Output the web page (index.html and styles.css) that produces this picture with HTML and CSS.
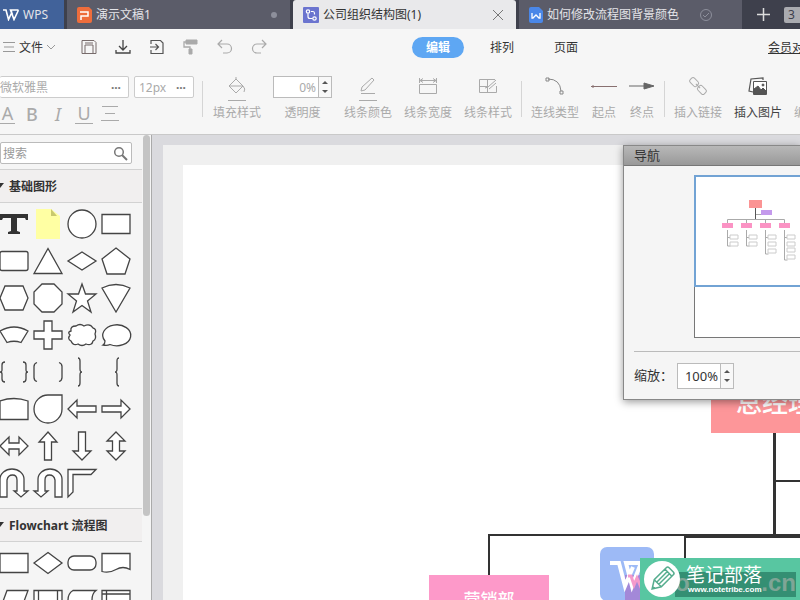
FILE: index.html
```html
<!DOCTYPE html>
<html lang="zh-CN">
<head>
<meta charset="utf-8">
<title>公司组织结构图(1)</title>
<link rel="stylesheet" href="styles.css">
</head>
<body>
<nav class="tabs">
  <a class="tab home" href="#"><svg width="16" height="12" viewBox="0 0 16 12" fill="none" stroke="#fff" stroke-width="1.6"><path d="M0 1h3l2.500 9.500L9 3M15.500 1h-8l3.500 9.500L15.500 1M8 1l1.500 5"/></svg><span>WPS</span></a>
  <a class="tab" href="#"><svg width="15" height="16" viewBox="0 0 15 16"><path d="M2 0h10l3 3v11a2 2 0 0 1-2 2H2a2 2 0 0 1-2-2V2a2 2 0 0 1 2-2z" fill="#ee6d3c"/><path d="M3 5h8v4H4v4" fill="none" stroke="#fff" stroke-width="1.500"/></svg><span class="name">演示文稿1</span><i class="dot"></i></a>
  <a class="tab active" href="#"><svg width="16" height="16" viewBox="0 0 16 16"><rect width="16" height="16" rx="1" fill="#6b74cf"/><g fill="none" stroke="#fff" stroke-width="1.200"><circle cx="5" cy="4.500" r="1.700"/><circle cx="11.500" cy="11.500" r="1.700"/><path d="M5 6.500v3q0 2 2 2h2.500M8 4.500h2q1.500 0 1.500 2v1"/></g></svg><span class="name">公司组织结构图(1)</span><svg width="12" height="12" viewBox="0 0 12 12" stroke="#777" fill="none"><path d="M1 1l10 10M11 1L1 11"/></svg></a>
  <a class="tab doc" href="#"><svg width="14" height="16" viewBox="0 0 14 16"><path d="M2 0h8l4 4v10a2 2 0 0 1-2 2H2a2 2 0 0 1-2-2V2a2 2 0 0 1 2-2z" fill="#4a87e8"/><path d="M3 6v5h1l3-3 3 3h1V6" fill="none" stroke="#fff" stroke-width="1.300"/></svg><span class="name">如何修改流程图背景颜色</span><svg class="check" width="12" height="12" viewBox="0 0 12 12" fill="none" stroke="#8d8f9b"><circle cx="6" cy="6" r="5.500"/><path d="M3 6l2 2 4-4"/></svg></a>
  <button class="add" aria-label="新建"><svg width="13" height="13" viewBox="0 0 13 13" stroke="#ddd" stroke-width="1.500"><path d="M0 6.500h13M6.500 0v13"/></svg></button>
  <span class="count">3</span>
</nav>

<header class="menu">
  <button class="file"><svg width="12" height="10" viewBox="0 0 12 10" stroke="#999"><path d="M0 .5h12M1 5h10M0 9.500h12"/></svg>文件<svg width="8" height="5" viewBox="0 0 8 5" fill="none" stroke="#999"><path d="M0 0l4 4 4-4"/></svg></button>
  <div class="quick">
    <button aria-label="保存"><svg width="16" height="16" viewBox="0 0 16 16" fill="none" stroke="#776b6b"><path d="M1 1.500h12l2 2v11H1zM4 14V6h8v8M4 4h8"/></svg></button>
    <button aria-label="下载"><svg width="16" height="16" viewBox="0 0 16 16" fill="none" stroke="#444" stroke-width="1.300"><path d="M8 1v10M4 7l4 4 4-4M1 11v3h14v-3"/></svg></button>
    <button aria-label="导出"><svg width="16" height="16" viewBox="0 0 16 16" fill="none" stroke="#555" stroke-width="1.200"><path d="M2 5V1.500h9.500l2.500 2.500v10.500H2V11M1 8h8M6.500 5L9.500 8l-3 3"/></svg></button>
    <button aria-label="格式刷"><svg width="16" height="16" viewBox="0 0 16 16" fill="none" stroke="#aaa"><path d="M3 1h11v4H3z" fill="#aaa"/><path d="M3 3H1v5h6v2" stroke-width="1.300"/><path d="M6 10h3v5H6z" fill="#aaa"/></svg></button>
    <button aria-label="撤销"><svg width="16" height="16" viewBox="0 0 16 16" fill="none" stroke="#aaa" stroke-width="1.200"><path d="M5 1L1 5l4 4M1 5h9a4.500 4.500 0 0 1 0 9H6"/></svg></button>
    <button aria-label="重做"><svg width="16" height="16" viewBox="0 0 16 16" fill="none" stroke="#aaa" stroke-width="1.200"><path d="M11 1l4 4-4 4M15 5H6a4.500 4.500 0 0 0 0 9h4"/></svg></button>
  </div>
  <div class="modes"><button class="on">编辑</button><button>排列</button><button>页面</button></div>
  <a class="member" href="#">会员对比</a>
</header>

<section class="ribbon">
  <div class="fonts">
    <div class="row">
      <label class="combo family"><input aria-label="字体" value="微软雅黑"><b>···</b></label>
      <label class="combo size"><input aria-label="字号" value="12px"><b>···</b></label>
    </div>
    <div class="row format">
      <button aria-label="文字颜色" class="under">A</button><button aria-label="加粗" class="bold">B</button><button aria-label="斜体" class="it">I</button><button aria-label="下划线" class="under">U</button><button aria-label="对齐"><svg width="18" height="15" viewBox="0 0 18 15" stroke="#aaa"><path d="M1 .5h16M4 7.500h10M0 14.500h18"/></svg></button>
    </div>
  </div>
  <hr>
  <button class="tool t60"><svg width="22" height="26" viewBox="0 0 22 26" fill="none" stroke="#aaa"><path d="M10 3l7 7-7 7-7-7zM10 3V1M17 10q3 3 1 6M3 10h14M2 24.500h18"/></svg>填充样式</button>
  <div class="tool opacity"><div class="spin"><input id="op" value="0%"><span><button aria-label="增加"></button><button aria-label="减少" class="down"></button></span></div><label for="op">透明度</label></div>
  <button class="tool t60"><svg width="22" height="26" viewBox="0 0 22 26" fill="none" stroke="#aaa"><path d="M4 15l1-4L15 2l2 2L8 14zM4 17.500h14M2 24.500h18"/></svg>线条颜色</button>
  <button class="tool t60"><svg width="22" height="26" viewBox="0 0 22 26" fill="none" stroke="#aaa"><path d="M2.500 8.500h17v9h-17zM2.500 2v5M19.500 2v5M3 4.500h16M6 2.500l-3 2 3 2M16 2.500l3 2-3 2"/></svg>线条宽度</button>
  <button class="tool t60"><svg width="22" height="26" viewBox="0 0 22 26" fill="none" stroke="#aaa"><path d="M18 3.500H2.500v13h17V10M2.500 10.500H11M10.500 3.500v13M19 4l-8 7-3 1M12 13l7-6"/></svg>线条样式</button>
  <hr class="tight">
  <button class="tool t64"><svg width="22" height="26" viewBox="0 0 22 26" fill="none" stroke="#888"><path d="M4 3q12 0 13 12M2 2h3v3H2zM16 15h3v3h-3z"/></svg>连线类型</button>
  <button class="tool t38"><svg width="28" height="26" viewBox="0 0 28 26" stroke="#887070"><path d="M1 10.500h26M3 9v3"/></svg>起点</button>
  <button class="tool t38"><svg width="28" height="26" viewBox="0 0 28 26" stroke="#666"><path d="M1 10h16"/><path d="M16 7l10 3-10 3z" fill="#666"/></svg>终点</button>
  <hr class="tight">
  <button class="tool t60"><svg width="22" height="26" viewBox="0 0 22 26" fill="none" stroke="#aaa"><g transform="rotate(45 11 10)"><rect x="1" y="7" width="9" height="6" rx="2"/><rect x="12" y="7" width="9" height="6" rx="2"/><path d="M8 10h6"/></g></svg>插入链接</button>
  <button class="tool t60 dark"><svg width="22" height="26" viewBox="0 0 22 26" fill="none" stroke="#555"><path d="M6 16l-4-1L4 3l12-1v2" stroke-width="1.200"/><path d="M6.500 5.500h13v13h-13z" fill="#fff"/><path d="M7 18v-5l4-3 3 4 2-2 3 3v3z" fill="#555"/><circle cx="16" cy="9" r="1" fill="#555"/></svg>插入图片</button>
  <button class="tool t60"><svg width="22" height="26" viewBox="0 0 22 26" fill="none" stroke="#aaa"><path d="M4 2h14l4 8-4 8H4L1 15V5z"/></svg>编辑图片</button>
</section>

<main class="work">
  <aside class="side">
    <div class="panel">
      <form class="find"><input aria-label="搜索" placeholder="搜索"><svg width="15" height="15" viewBox="0 0 15 15" fill="none" stroke="#777" stroke-width="1.500"><circle cx="6" cy="6" r="4.300"/><path d="M9 9l5 5" stroke-width="2"/></svg></form>
      <h2>基础图形</h2>
      <div class="shapes">
        <svg viewBox="-17 -18 34 37"><path d="M-14-10H14v6h-2l-1-2H3V7l3 1v2H-6V8l3-1V-6h-8l-1 2h-2z" fill="#333" stroke="none"/></svg>
        <svg viewBox="-17 -18 34 37"><path d="M-12-15H3l9 7V15h-24z" fill="#ffffa3" stroke="none"/><path d="M3-15v7h6z" fill="#c9c96e" stroke="none"/></svg>
        <svg viewBox="-17 -18 34 37"><circle r="14"/></svg>
        <svg viewBox="-17 -18 34 37"><path d="M-14-9.500h28v19h-28z"/></svg>
        <svg viewBox="-17 -18 34 37"><rect x="-14" y="-9.500" width="28" height="19" rx="2"/></svg>
        <svg viewBox="-17 -18 34 37"><path d="M0-12.500L14 12.500h-28z"/></svg>
        <svg viewBox="-17 -18 34 37"><path d="M0-9L14 0 0 9-14 0z"/></svg>
        <svg viewBox="-17 -18 34 37"><path d="M0-13L14-2 9 13H-9L-14-2z"/></svg>
        <svg viewBox="-17 -18 34 37"><path d="M-9-12H9L14 0 9 12H-9L-14 0z"/></svg>
        <svg viewBox="-17 -18 34 37"><path d="M-6-14H6l8 8V6l-8 8H-6l-8-8V-6z"/></svg>
        <svg viewBox="-17 -18 34 37"><path d="M0-14l3.500 10H14L5.500 3 9 14 0 7.500-9 14-5.500 3-14-4h10.500z"/></svg>
        <svg viewBox="-17 -18 34 37"><path d="M-14-10Q0-17 14-10L0 14z"/></svg>
        <svg viewBox="-17 -18 34 37"><path d="M-14-4Q0-12 14-4L7 7.500Q0 5-7 7.500z"/></svg>
        <svg viewBox="-17 -18 34 37"><path d="M-4-14h8V-4h10v8H4v10h-8V4h-10v-8H-4z"/></svg>
        <svg viewBox="-17 -18 34 37"><path d="M-11-4Q-12-9-6-9-2-12 2-9 8-12 11-7 15-6 13-1 15 4 11 6 10 11 4 9 0 12-4 9-9 11-11 6-15 4-12 0-15-3-11-4z"/></svg>
        <svg viewBox="-17 -18 34 37"><path d="M-11 6A14 10.500 0 1 1-6 9.500Q-9 11-13 10-11 9-11 6z"/></svg>
        <svg viewBox="-17 -18 34 37"><path class="line" d="M-9-10q-3 0-3 3v5q0 2-2 2 2 0 2 2v5q0 3 3 3M9-10q3 0 3 3v5q0 2 2 2-2 0-2 2v5q0 3-3 3"/></svg>
        <svg viewBox="-17 -18 34 37"><path class="line" d="M-11-9.500q-3 1-3 4v11q0 3 3 4M11-9.500q3 1 3 4v11q0 3-3 4"/></svg>
        <svg viewBox="-17 -18 34 37"><path class="line" d="M-4-14q2 0 2 3V-3q0 3 2 3-2 0-2 3v8q0 3-2 3"/></svg>
        <svg viewBox="-17 -18 34 37"><path class="line" d="M3-14q-2 0-2 3V-3q0 3-2 3 2 0 2 3v8q0 3 2 3"/></svg>
        <svg viewBox="-17 -18 34 37"><path d="M-14-8Q0-13 14-8V10.500h-28z"/></svg>
        <svg viewBox="-17 -18 34 37"><path d="M0-14H14V0A14 14 0 1 1 0-14z"/></svg>
        <svg viewBox="-17 -18 34 37"><path d="M-14 0l9-9v6h19v6H-5v6z"/></svg>
        <svg viewBox="-17 -18 34 37"><path d="M14 0l-9-9v6h-19v6H5v6z"/></svg>
        <svg viewBox="-17 -18 34 37"><path d="M-14 0l9-9v6H5v-6l9 9-9 9V3H-5v6z"/></svg>
        <svg viewBox="-17 -18 34 37"><path d="M0-14l9 10H3.500v18h-7V-4H-9z"/></svg>
        <svg viewBox="-17 -18 34 37"><path d="M0 14L9 5H3.500v-19h-7V5H-9z"/></svg>
        <svg viewBox="-17 -18 34 37"><path d="M0-14l9 9H3.500V5H9L0 14-9 5h5.500V-5H-9z"/></svg>
        <svg viewBox="-17 -18 34 37"><path d="M-14 14V-4a12 10 0 0 1 24 0V8h4L7 14 0 8h3V-3q0-5-4.500-5T-7-3v17z"/></svg>
        <svg viewBox="-17 -18 34 37"><path d="M14 14V-4a12 10 0 0 0-24 0V8h-4l7 6L0 8h-3V-3q0-5 4.500-5T7-3v17z"/></svg>
        <svg viewBox="-17 -18 34 37"><path d="M-14-13.500h28l-5 5H-9V9l-5 5z"/></svg>
      </div>
      <h2>Flowchart 流程图</h2>
      <div class="shapes">
        <svg viewBox="-17 -18 34 37"><path d="M-14-9.500h28v19h-28z"/></svg>
        <svg viewBox="-17 -18 34 37"><path d="M0-10.500L14 0 0 10.500-14 0z"/></svg>
        <svg viewBox="-17 -18 34 37"><rect x="-14" y="-7" width="28" height="14" rx="6"/></svg>
        <svg viewBox="-17 -18 34 37"><path d="M-14-9.500h28v16q-7-4-14 0t-14 2z"/></svg>
        <svg viewBox="-17 -18 34 37"><path d="M-7-9.500h21l-7 19h-21z"/></svg>
        <svg viewBox="-17 -18 34 37"><path d="M-14-9.500h28v19h-28zM-9.500-9.500v19M9.500-9.500v19"/></svg>
        <svg viewBox="-17 -18 34 37"><path d="M-9-9.500h23q-4 3-4 9.500t4 9.500H-9q-5-3-5-9.500t5-9.500z"/></svg>
        <svg viewBox="-17 -18 34 37"><path d="M-14-9.500h28v19h-28zM-9.500-9.500v19M-14-6h28"/></svg>
      </div>
    </div>
    <div class="track"><i></i></div>
  </aside>

  <div class="canvas">
    <div class="page">
      <svg class="wires" width="700" height="500" viewBox="0 0 700 500" fill="none" stroke="#333" stroke-width="2"><path d="M306 410v-40h334M502 371v60M591 316h60"/><path d="M591.500 260v111M502 371.500h150" stroke-width="3"/></svg>
      <div class="node root">总经理</div>
      <div class="node sales">营销部</div>
    </div>
    <svg class="logo" width="54" height="54" viewBox="0 0 54 54"><rect width="54" height="54" rx="7" fill="#9dbaf6"/><path d="M25 28h29v26H25z" fill="#a388d8"/><path d="M10 16h9l6 23 8-19M42 16H26l6 23 9-23" fill="none" stroke="#fff" stroke-width="4"/><path d="M28 29h3l3 9 3-7 3 7 3-9" fill="none" stroke="#f59acb" stroke-width="3"/></svg>
    <div class="brand">
      <svg width="36" height="36" viewBox="0 0 36 36"><circle cx="18" cy="18" r="18" fill="#fff"/><g fill="none" stroke="#55ad8e" stroke-width="1.500" transform="rotate(45 18 18)"><path d="M13 7q0-2 2-2h6q2 0 2 2v17l-5 8-5-8zM13 9h10M13 24h10M16.500 9v15M19.500 9v15M16.500 30h3"/></g></svg>
      <div class="under-mark"><span>o</span><span>.cn</span></div>
      <div class="words"><strong>笔记部落</strong><small>www.notetribe.com</small></div>
    </div>
    <section class="navigator">
      <h3>导航</h3>
      <div class="preview"><div class="view">
        <svg width="106" height="108" viewBox="0 0 106 108"><g fill="none" stroke="#aaa"><path d="M31.500 50v-7.500h57V50M50.500 43v7M69.500 43v7M60 37.500h6"/><path d="M59.500 31v11" stroke="#555"/><path d="M31.500 53v16h3M50.500 53v16h3M69.500 53v24h3M88.500 53v30h3M31.500 60.500h3M50.500 60.500h3M69.500 60.500h3M88.500 60.500h3"/><path d="M34 58h8v4h-8zM34 65h8v4h-8zM53 58h8v4h-8zM53 65h8v4h-8zM72 58h8v4h-8zM72 65h8v4h-8zM72 72h8v4h-8zM91 58h8v4h-8zM91 65h8v4h-8zM91 71h8v4h-8zM91 78h8v4h-8z" fill="#fff" stroke="#ccc"/></g><path d="M53 23h13v8H53z" fill="#fb9494"/><path d="M65 33h11v5H65z" fill="#c49aec"/><path d="M26 46h11v5H26zM45 46h11v5H45zM64 46h11v5H64zM83 46h11v5H83z" fill="#fb93c4"/></svg>
      </div></div>
      <div class="zoom"><label for="zm">缩放：</label><div class="spin"><input id="zm" value="100%"><span><button aria-label="放大"></button><button aria-label="缩小" class="down"></button></span></div></div>
    </section>
  </div>
</main>
</body>
</html>
```
FILE: styles.css
```css
* { box-sizing: border-box; }
body, button, input { font-family: "Noto Sans", "Noto Sans CJK SC", sans-serif; font-size: 12px; }
body { margin: 0; height: 100vh; display: flex; flex-direction: column; overflow: hidden; background: #f6f6f6; color: #333; }
button { padding: 0; border: 0; background: none; color: inherit; flex: none; }
input { border: 0; padding: 0; min-width: 0; background: none; color: inherit; outline: 0; }
svg { flex: none; display: block; }
a { color: inherit; }

.tabs { height: 29px; flex: none; display: flex; align-items: stretch; gap: 3px; background: #3e404c; color: #e4e4e8; overflow: hidden; }
.tab { flex: 0 0 223px; display: flex; align-items: center; gap: 4px; padding: 0 12px 0 10px; background: #5b5c69; text-decoration: none; line-height: 29px; white-space: nowrap; }
.tab .name { flex: 1; }
.home { flex-basis: 64px; background: #41629a; padding: 0 0 0 3px; }
.active { background: #e9e9eb; color: #333; border-radius: 3px 3px 0 0; padding-left: 10px; }
.doc { padding-left: 10px; }
.check { margin-right: 18px; }
.dot { width: 6px; height: 6px; border-radius: 3px; background: #8d8f9b; margin-right: 1px; }
.add { width: 36px; display: flex; align-items: center; justify-content: center; }
.count { align-self: center; flex: none; width: 22px; height: 16px; padding-left: 4px; line-height: 16px; background: #aaabb0; color: #3e404c; border-radius: 2px; }

.menu { height: 36px; flex: none; display: flex; align-items: center; overflow: hidden; }
.file { display: flex; align-items: center; gap: 4px; padding-left: 3px; width: 81px; }
.quick { display: flex; gap: 18px; width: 331px; flex: none; }
.modes { display: flex; gap: 12px; flex: none; }
.modes button { width: 52px; height: 21px; border-radius: 11px; }
.modes .on { background: #5ea7f3; color: #fff; font-weight: bold; }
.member { margin-left: 176px; white-space: nowrap; flex: none; }

.ribbon { height: 70px; flex: none; display: flex; border-bottom: 1px solid #c9c9c9; color: #aaa; overflow: hidden; }
.ribbon hr { width: 1px; height: 36px; margin: 16px 4px 0; border: 0; background: #d5d5d5; flex: none; }
.ribbon .tight { margin: 16px 3px 0; }
.fonts { flex: none; width: 198px; padding-top: 11px; }
.row { display: flex; gap: 5px; }
.combo { display: flex; align-items: center; height: 22px; border: 1px solid #ccc; border-radius: 2px; background: #fff; padding: 0 7px 0 4px; }
.combo input { flex: 1; }
.combo b { color: #777; }
.family { width: 129px; border-left: 0; padding-left: 0; }
.size { width: 60px; }
.format { gap: 8px; margin-top: 5px; }
.format button { width: 18px; height: 21px; font-size: 18px; line-height: 20px; display: flex; justify-content: center; align-items: center; }
.format button:first-child { width: 15px; }
.format .bold { font-weight: 500; }
.format .it { font-style: italic; }
.format .under { border-bottom: 1px solid #aaa; }
.tool { flex: none; display: flex; flex-direction: column; align-items: center; padding-top: 11px; line-height: 18px; white-space: nowrap; }
.tool > svg { margin-bottom: 2px; }
.tool .spin { margin-bottom: 6px; }
.t60, .t64 { width: 60px; }
.t38 { width: 38px; }
.dark { color: #444; }
.opacity { width: 71px; }
.spin { display: flex; width: 59px; height: 22px; border: 1px solid #bbb; background: #fff; }
.spin input { flex: 1; text-align: right; padding-right: 2px; }
.spin span { display: flex; flex-direction: column; justify-content: center; gap: 6px; width: 13px; border-left: 1px solid #bbb; align-items: center; background: #f8f8f8; }
.spin button { border: solid transparent; border-width: 0 3px 3px; border-bottom-color: #555; width: 6px; height: 3px; }
.spin .down { border-width: 3px 3px 0; border-top-color: #555; }

.work { flex: 1; min-height: 0; display: flex; }
.side { flex: none; width: 152px; display: flex; border-right: 1px solid #aaa; background: #f5f5f5; overflow: hidden; }
.panel { width: 142px; overflow: hidden; }
.track { width: 9px; padding-left: 1px; }
.track i { display: block; width: 7px; height: 381px; border-radius: 4px; background: #c4c4c4; }
.find { display: flex; align-items: center; height: 22px; width: 132px; margin: 7px 0 5px; border: 1px solid #bbb; border-radius: 2px; background: #fff; padding: 0 3px 0 2px; }
.find input { flex: 1; }
.find input::placeholder { color: #999; }
h2 { margin: 0; height: 34px; padding-left: 9px; line-height: 33px; font-size: 12px; border: solid #d2d2d2; border-width: 1px 0; background: #f1efef; position: relative; }
h2::before { content: ""; position: absolute; left: -4px; top: 13px; border: 4px solid transparent; border-top: 5px solid #333; border-bottom: 0; }
.shapes { display: grid; grid-template-columns: repeat(4, 34px); grid-auto-rows: 37px; margin-left: -3px; padding: 3px 0 6px; }
.shapes svg { width: 34px; height: 37px; fill: #fff; stroke: #444; stroke-width: 1.3px; }
.shapes .line { fill: none; }

.canvas { flex: 1; min-width: 0; position: relative; overflow: hidden; background: #dadade; padding: 10px 0 0 11px; display: flex; }
.page { flex: 1; border: solid #f0f0f0; border-width: 20px 0 0 20px; background: #fff; position: relative; overflow: hidden; }
.wires { position: absolute; left: 0; top: 0; }
.node { position: absolute; display: flex; align-items: center; justify-content: center; color: #fff; font-weight: 500; }
.root { left: 528px; top: 204px; width: 128px; height: 64px; background: #fd9699; font-size: 26px; }
.sales { left: 246px; top: 410px; width: 120px; height: 46px; background: #fd99c9; font-size: 17px; }
.logo { position: absolute; left: 448px; bottom: -1px; }
.brand { position: absolute; left: 488px; right: 0; bottom: 0; height: 42px; background: #58c6a1; display: flex; align-items: center; gap: 6px; padding-left: 4px; color: #fff; }
.brand svg { z-index: 1; }
.under-mark { position: absolute; left: 35px; right: 4px; bottom: 3px; height: 25px; display: flex; justify-content: space-between; background: #348f73; color: #7fa596; font: bold 24px/22px "Liberation Sans", sans-serif; }
.words { position: relative; display: flex; flex-direction: column; flex: none; }
.words strong { font-size: 19px; line-height: 20px; padding-top: 2px; font-weight: 400; }
.words small { font: bold 8px/10px "Liberation Sans", sans-serif; padding-left: 2px; }

.navigator { position: absolute; left: 471px; right: 0; top: 10px; height: 255px; display: flex; flex-direction: column; border: 1px solid #888; border-right: 0; background: #f5f5f5; box-shadow: 0 2px 8px #0006; overflow: clip; overflow-clip-margin: 10px; }
h3 { margin: 0; height: 20px; padding-left: 10px; font-size: 13px; line-height: 19px; font-weight: 400; background: linear-gradient(#b8b8b8, #999); border-bottom: 1px solid #777; }
.preview { margin: 9px 0 0 70px; height: 163px; border: 1px solid #777; border-right: 0; background: #fff; }
.view { height: 112px; margin: -1px 0 0 -1px; border: 2px solid #72a3d4; border-right: 0; }
.zoom { display: flex; align-items: center; gap: 4px; margin: 13px 0 0 10px; padding-top: 11px; border-top: 1px solid #bbb; font-size: 13px; }
.zoom label { width: 39px; white-space: nowrap; line-height: 20px; padding-bottom: 2px; }
.zoom .spin { width: 57px; height: 26px; }
.zoom input { font-size: 13px; }
```
